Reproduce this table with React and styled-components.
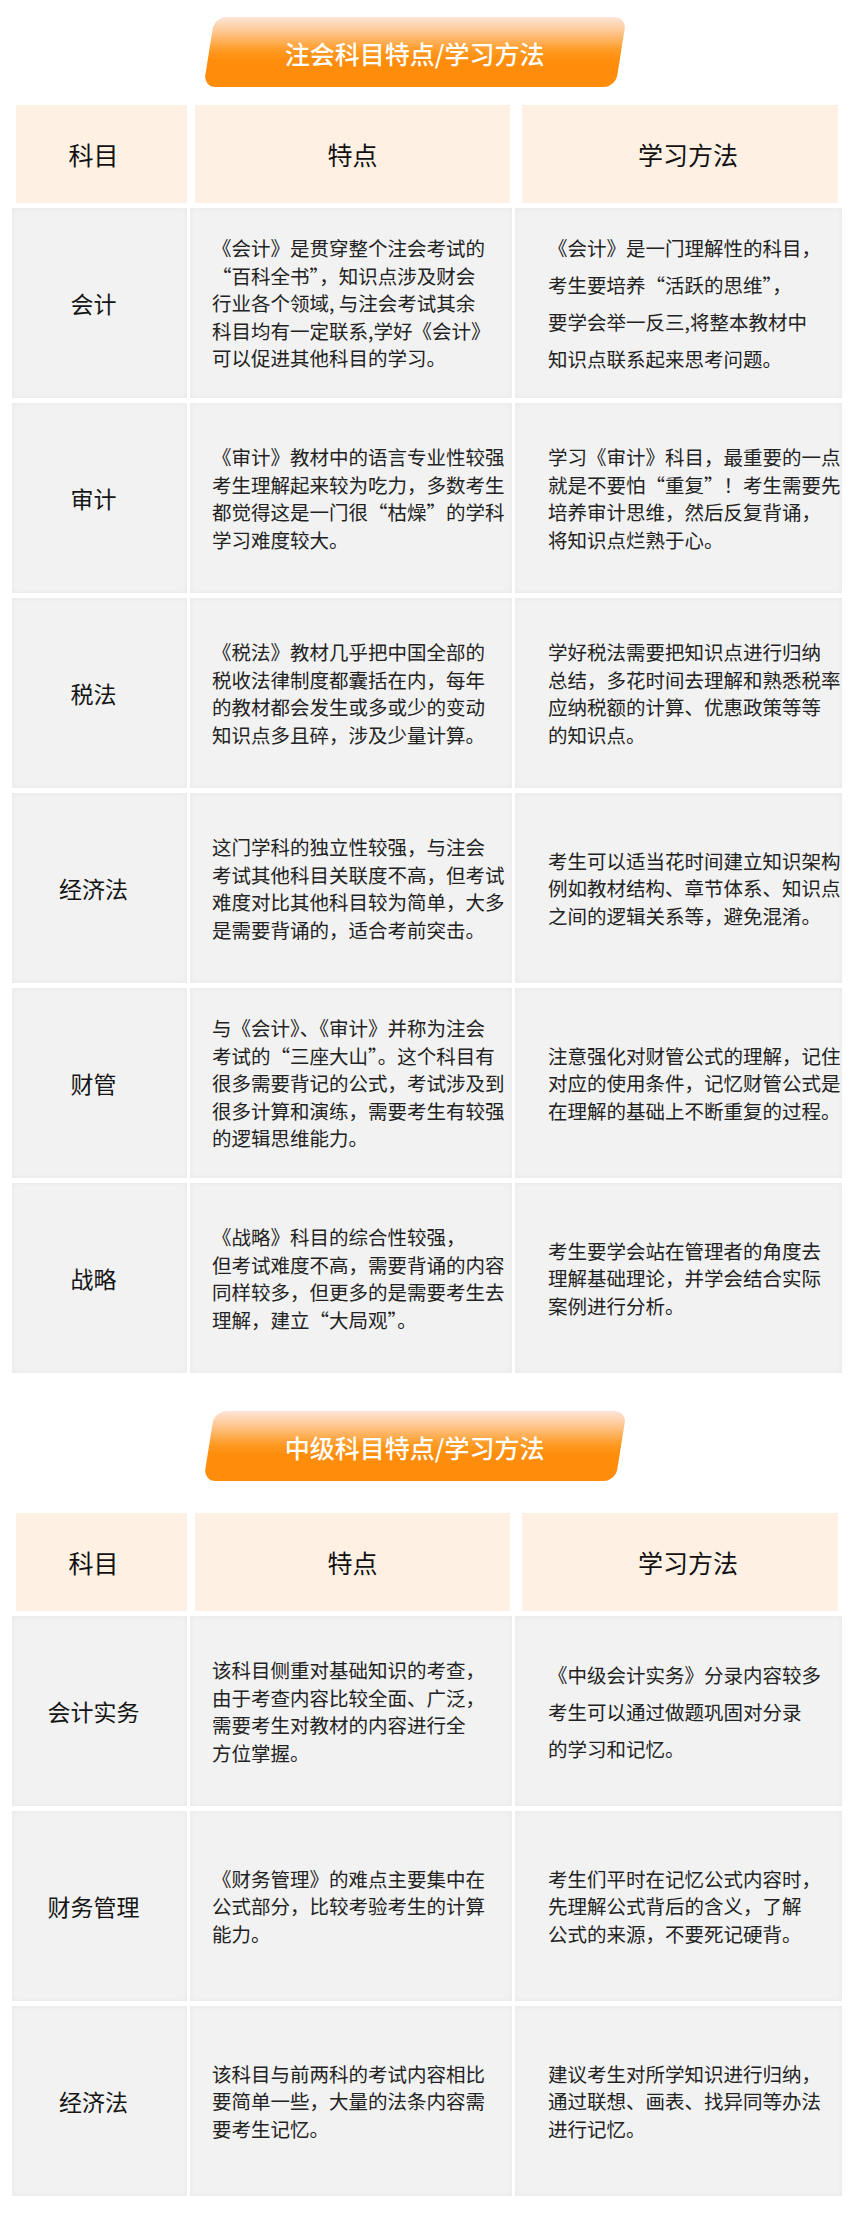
import React from 'react';
import styled, { createGlobalStyle } from 'styled-components';

const GlobalStyle = createGlobalStyle`
  html, body {
    margin: 0;
    padding: 0;
    background: #ffffff;
  }
  body {
    font-family: "Noto Sans CJK SC", "Noto Sans", sans-serif;
    color: #222222;
  }
`;

const Page = styled.div`
  width: 855px;
  padding: 17px 0 24px;
  box-sizing: border-box;
`;

const Section = styled.section`
  margin-top: ${(p) => p.$top || 0}px;
`;

const Banner = styled.div`
  width: 412px;
  height: 70px;
  margin-left: 209px;
  display: flex;
  align-items: center;
  justify-content: center;
  border-radius: 12px;
  transform: skewX(-9deg);
  background: linear-gradient(
    180deg,
    #fbe5d9 0%,
    #ffc58c 22%,
    #ff9a22 48%,
    #ff8d0c 62%,
    #ff8c0a 100%
  );
`;

const BannerText = styled.span`
  transform: skewX(9deg);
  color: #ffffff;
  font-size: 25px;
  font-weight: 500;
  line-height: 1;
  margin-top: 2px;
`;

const Table = styled.div`
  margin-top: ${(p) => p.$gap}px;
  display: flex;
  flex-direction: column;
  gap: 5px;
`;

const HeadRow = styled.div`
  display: grid;
  grid-template-columns: 171px 315px 320px;
  column-gap: 8px;
  padding-left: 16px;
  height: 98px;
`;

const HeadCell = styled.div`
  display: flex;
  align-items: center;
  justify-content: center;
  background: #fef0e3;
  font-size: 25px;
  color: #111111;
  padding-right: ${(p) => p.$shiftLeft || 0}px;
  padding-left: ${(p) => p.$shiftRight || 0}px;
  ${(p) => p.$wideGap && 'margin-left: 4px;'}
`;

const Row = styled.div`
  display: grid;
  grid-template-columns: 175px 322px 327px;
  column-gap: 3px;
  padding-left: 12px;
  height: 190px;
`;

const CellBase = styled.div`
  background: #f2f2f2;
  box-shadow: inset 0 0 6px rgba(0, 0, 0, 0.045);
  display: flex;
  align-items: center;
`;

const SubjectCell = styled(CellBase)`
  justify-content: center;
  padding-right: 12px;
  font-size: 23px;
  color: #151515;
`;

const TextCell = styled(CellBase)`
  padding-left: ${(p) => p.$pad}px;
`;

const Lines = styled.div`
  font-size: 19.5px;
  line-height: ${(p) => (p.$loose ? 37 : 27.5)}px;
  color: #222222;
`;

const Line = styled.div`
  white-space: nowrap;
`;

const ceTable = [
  {
    subject: '会计',
    feature: [
      '《会计》是贯穿整个注会考试的',
      '“百科全书”，知识点涉及财会',
      '行业各个领域, 与注会考试其余',
      '科目均有一定联系,学好《会计》',
      '可以促进其他科目的学习。',
    ],
    method: [
      '《会计》是一门理解性的科目，',
      '考生要培养“活跃的思维”，',
      '要学会举一反三,将整本教材中',
      '知识点联系起来思考问题。',
    ],
    loose: true,
  },
  {
    subject: '审计',
    feature: [
      '《审计》教材中的语言专业性较强',
      '考生理解起来较为吃力，多数考生',
      '都觉得这是一门很“枯燥”的学科',
      '学习难度较大。',
    ],
    method: [
      '学习《审计》科目，最重要的一点',
      '就是不要怕“重复”！考生需要先',
      '培养审计思维，然后反复背诵，',
      '将知识点烂熟于心。',
    ],
  },
  {
    subject: '税法',
    feature: [
      '《税法》教材几乎把中国全部的',
      '税收法律制度都囊括在内，每年',
      '的教材都会发生或多或少的变动',
      '知识点多且碎，涉及少量计算。',
    ],
    method: [
      '学好税法需要把知识点进行归纳',
      '总结，多花时间去理解和熟悉税率',
      '应纳税额的计算、优惠政策等等',
      '的知识点。',
    ],
  },
  {
    subject: '经济法',
    feature: [
      '这门学科的独立性较强，与注会',
      '考试其他科目关联度不高，但考试',
      '难度对比其他科目较为简单，大多',
      '是需要背诵的，适合考前突击。',
    ],
    method: [
      '考生可以适当花时间建立知识架构',
      '例如教材结构、章节体系、知识点',
      '之间的逻辑关系等，避免混淆。',
    ],
  },
  {
    subject: '财管',
    feature: [
      '与《会计》、《审计》并称为注会',
      '考试的“三座大山”。这个科目有',
      '很多需要背记的公式，考试涉及到',
      '很多计算和演练，需要考生有较强',
      '的逻辑思维能力。',
    ],
    method: [
      '注意强化对财管公式的理解，记住',
      '对应的使用条件，记忆财管公式是',
      '在理解的基础上不断重复的过程。',
    ],
  },
  {
    subject: '战略',
    feature: [
      '《战略》科目的综合性较强，',
      '但考试难度不高，需要背诵的内容',
      '同样较多，但更多的是需要考生去',
      '理解，建立“大局观”。',
    ],
    method: [
      '考生要学会站在管理者的角度去',
      '理解基础理论，并学会结合实际',
      '案例进行分析。',
    ],
  },
];

const midTable = [
  {
    subject: '会计实务',
    feature: [
      '该科目侧重对基础知识的考查，',
      '由于考查内容比较全面、广泛，',
      '需要考生对教材的内容进行全',
      '方位掌握。',
    ],
    method: [
      '《中级会计实务》分录内容较多',
      '考生可以通过做题巩固对分录',
      '的学习和记忆。',
    ],
    loose: true,
  },
  {
    subject: '财务管理',
    feature: [
      '《财务管理》的难点主要集中在',
      '公式部分，比较考验考生的计算',
      '能力。',
    ],
    method: [
      '考生们平时在记忆公式内容时，',
      '先理解公式背后的含义，了解',
      '公式的来源，不要死记硬背。',
    ],
  },
  {
    subject: '经济法',
    feature: [
      '该科目与前两科的考试内容相比',
      '要简单一些，大量的法条内容需',
      '要考生记忆。',
    ],
    method: [
      '建议考生对所学知识进行归纳，',
      '通过联想、画表、找异同等办法',
      '进行记忆。',
    ],
  },
];

function TextBlock({ lines, loose }) {
  return (
    <Lines $loose={loose}>
      {lines.map((l) => (
        <Line key={l}>{l}</Line>
      ))}
    </Lines>
  );
}

function SubjectTable({ title, rows, top, gap }) {
  return (
    <Section $top={top}>
      <Banner>
        <BannerText>{title}</BannerText>
      </Banner>
      <Table $gap={gap}>
        <HeadRow>
          <HeadCell $shiftLeft={16}>科目</HeadCell>
          <HeadCell>特点</HeadCell>
          <HeadCell $shiftRight={16} $wideGap>学习方法</HeadCell>
        </HeadRow>
        {rows.map((r) => (
          <Row key={r.subject}>
            <SubjectCell>{r.subject}</SubjectCell>
            <TextCell $pad={22}>
              <TextBlock lines={r.feature} />
            </TextCell>
            <TextCell $pad={33}>
              <TextBlock lines={r.method} loose={r.loose} />
            </TextCell>
          </Row>
        ))}
      </Table>
    </Section>
  );
}

export default function App() {
  return (
    <Page>
      <GlobalStyle />
      <SubjectTable title="注会科目特点/学习方法" rows={ceTable} gap={18} />
      <SubjectTable title="中级科目特点/学习方法" rows={midTable} top={38} gap={32} />
    </Page>
  );
}
